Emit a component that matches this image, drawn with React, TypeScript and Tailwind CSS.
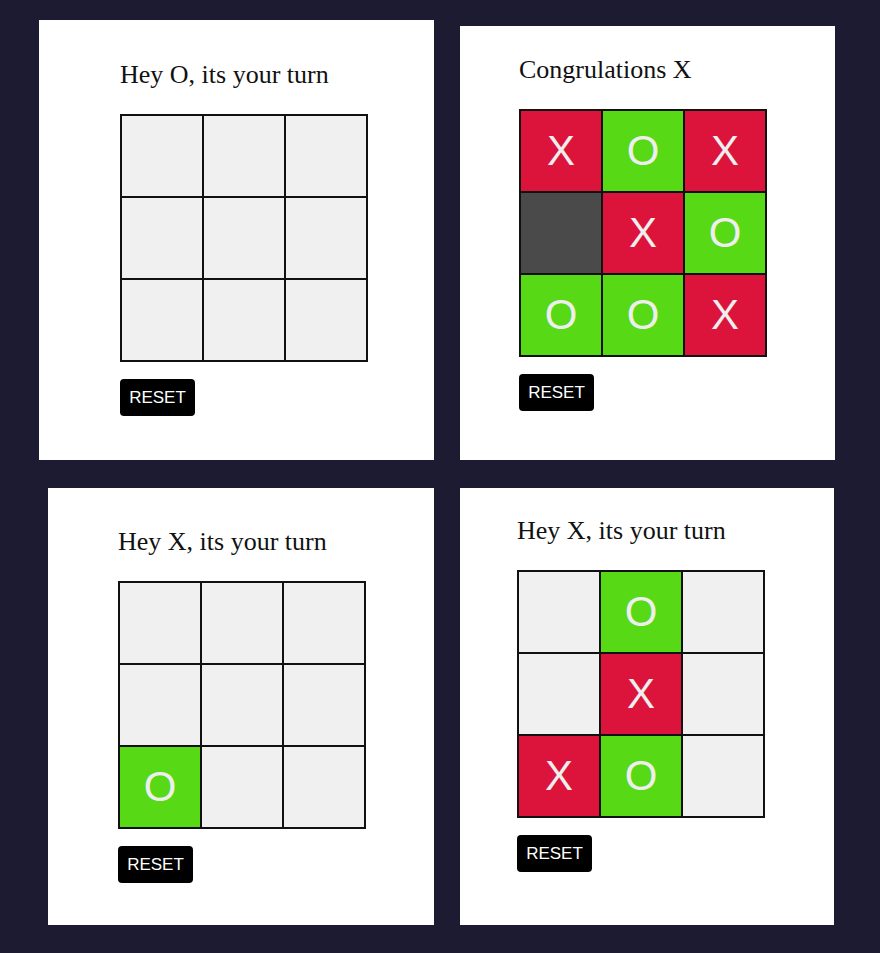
type Mark = "" | "X" | "O" | "D";

const cellColor: Record<Mark, string> = {
  "": "bg-[#f0f0f0]",
  X: "bg-[#dc143c]",
  O: "bg-[#57d915]",
  D: "bg-[#4a4a4a]",
};

function Board({ cells }: { cells: Mark[] }) {
  return (
    <div className="grid grid-cols-[repeat(3,82px)] border border-[#111] w-[248px]">
      {cells.map((c, i) => (
        <div
          key={i}
          className={`h-[82px] w-[82px] border border-[#111] flex items-center justify-center text-[42px] leading-none text-[#eeeeee] font-['Liberation_Sans',Arial,sans-serif] ${cellColor[c]}`}
        >
          {c === "D" ? "" : c}
        </div>
      ))}
    </div>
  );
}

function Game({
  title,
  cells,
  className,
  inner,
}: {
  title: string;
  cells: Mark[];
  className: string;
  inner: string;
}) {
  return (
    <div className={`bg-white shrink-0 ${className}`}>
      <div className={inner}>
        <h2 className="font-['Liberation_Serif','Times_New_Roman',serif] text-[26px] leading-[30px] text-[#111] mb-[24px]">
          {title}
        </h2>
        <Board cells={cells} />
        <button className="mt-[17px] w-[75px] h-[37px] rounded-[4px] bg-black text-white text-[17px] font-['Liberation_Sans',Arial,sans-serif] flex items-center justify-center">
          RESET
        </button>
      </div>
    </div>
  );
}

export default function App() {
  return (
    <main className="w-[880px] h-[953px] bg-[#1c1b31] overflow-hidden">
      <div className="flex items-start">
        <Game
          title="Hey O, its your turn"
          cells={["", "", "", "", "", "", "", "", ""]}
          className="ml-[39px] mt-[20px] w-[395px] h-[440px]"
          inner="pl-[81px] pt-[40px]"
        />
        <Game
          title="Congrulations X"
          cells={["X", "O", "X", "D", "X", "O", "O", "O", "X"]}
          className="ml-[26px] mt-[26px] w-[375px] h-[434px]"
          inner="pl-[59px] pt-[29px]"
        />
      </div>
      <div className="flex items-start mt-[28px]">
        <Game
          title="Hey X, its your turn"
          cells={["", "", "", "", "", "", "O", "", ""]}
          className="ml-[48px] w-[386px] h-[437px]"
          inner="pl-[70px] pt-[39px]"
        />
        <Game
          title="Hey X, its your turn"
          cells={["", "O", "", "", "X", "", "X", "O", ""]}
          className="ml-[26px] w-[374px] h-[437px]"
          inner="pl-[57px] pt-[28px]"
        />
      </div>
    </main>
  );
}
